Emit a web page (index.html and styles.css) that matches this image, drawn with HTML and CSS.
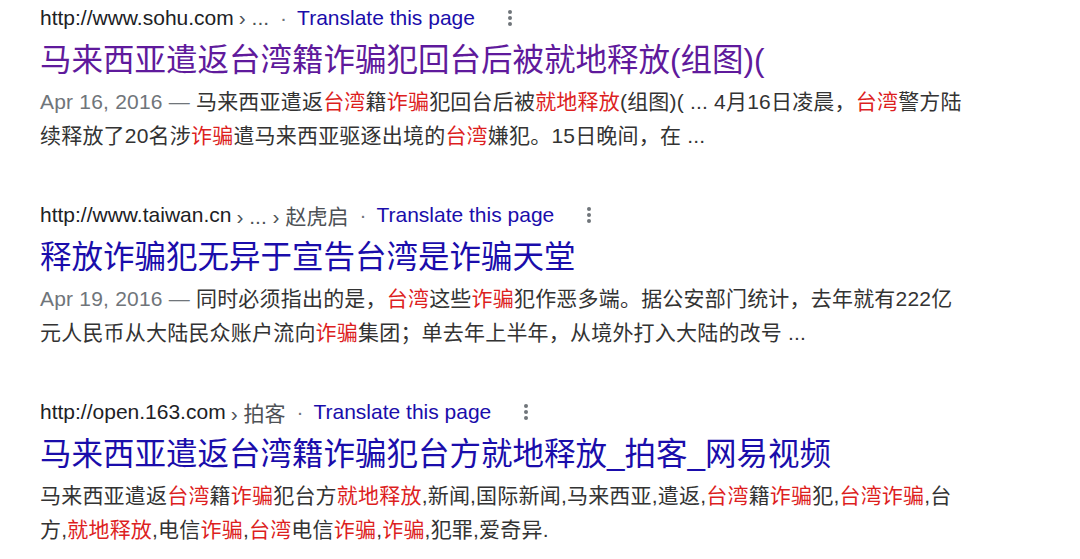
FILE: index.html
```html
<!DOCTYPE html>
<html>
<head>
  <meta charset="utf-8">
  <title>搜索结果</title>
  <link rel="stylesheet" href="styles.css">
</head>
<body>
  <div class="results">
    <div class="result">
      <div class="url-line">
        <span class="site">http://www.sohu.com</span>
        <span class="crumb">› ...</span>
        <span class="sep">·</span>
        <a class="translate" href="#">Translate this page</a>
        <span class="more"><i></i><i></i><i></i></span>
      </div>
      <a class="title visited" href="#">马来西亚遣返台湾籍诈骗犯回台后被就地释放(组图)(</a>
      <div class="snippet">
        <span class="date">Apr 16, 2016 — </span>马来西亚遣返<em>台湾</em>籍<em>诈骗</em>犯回台后被<em>就地释放</em>(组图)( ... 4月16日凌晨，<em>台湾</em>警方陆<br>续释放了20名涉<em>诈骗</em>遣马来西亚驱逐出境的<em>台湾</em>嫌犯。15日晚间，在 ...
      </div>
    </div>

    <div class="result">
      <div class="url-line">
        <span class="site">http://www.taiwan.cn</span>
        <span class="crumb">› ... › 赵虎启</span>
        <span class="sep">·</span>
        <a class="translate" href="#">Translate this page</a>
        <span class="more"><i></i><i></i><i></i></span>
      </div>
      <a class="title" href="#">释放诈骗犯无异于宣告台湾是诈骗天堂</a>
      <div class="snippet">
        <span class="date">Apr 19, 2016 — </span>同时必须指出的是，<em>台湾</em>这些<em>诈骗</em>犯作恶多端。据公安部门统计，去年就有222亿<br>元人民币从大陆民众账户流向<em>诈骗</em>集团；单去年上半年，从境外打入大陆的改号 ...
      </div>
    </div>

    <div class="result">
      <div class="url-line">
        <span class="site">http://open.163.com</span>
        <span class="crumb">› 拍客</span>
        <span class="sep">·</span>
        <a class="translate" href="#">Translate this page</a>
        <span class="more"><i></i><i></i><i></i></span>
      </div>
      <a class="title" href="#">马来西亚遣返台湾籍诈骗犯台方就地释放_拍客_网易视频</a>
      <div class="snippet">
        马来西亚遣返<em>台湾</em>籍<em>诈骗</em>犯台方<em>就地释放</em>,新闻,国际新闻,马来西亚,遣返,<em>台湾</em>籍<em>诈骗</em>犯,<em>台湾诈骗</em>,台<br>方,<em>就地释放</em>,电信<em>诈骗</em>,<em>台湾</em>电信<em>诈骗</em>,<em>诈骗</em>,犯罪,爱奇异.
      </div>
    </div>
  </div>
</body>
</html>
```

FILE: styles.css
```css
body {
  margin: 0;
  background-color: #fff;
  font-family: "Liberation Sans", Arial, "Noto Sans CJK SC", sans-serif;
  color: #202124;
}
.results {
  padding: 4px 0 0 40px;
  width: 1000px;
}
.result {
  margin-bottom: 48px;
}
.result:last-child {
  margin-bottom: 0;
}
.url-line {
  display: flex;
  align-items: center;
  height: 28px;
  font-size: 21px;
  white-space: nowrap;
}
.site {
  color: #202124;
}
.crumb {
  color: #4d5156;
  margin-left: 5px;
}
.sep {
  color: #70757a;
  margin: 0 10px 0 11px;
}
.translate {
  color: #1a0dab;
  text-decoration: none;
}
.more {
  display: flex;
  flex-direction: column;
  gap: 2px;
  margin-left: 33px;
}
.more i {
  display: block;
  width: 4px;
  height: 4px;
  border-radius: 50%;
  background-color: #70757a;
}
.title {
  display: block;
  margin-top: 8px;
  font-size: 31.5px;
  line-height: 40px;
  color: #1a0dab;
  text-decoration: none;
  white-space: nowrap;
}
.title.visited {
  color: #5f1a9c;
}
.snippet {
  margin-top: 5px;
  font-size: 21px;
  line-height: 34px;
  color: #333;
  white-space: nowrap;
  letter-spacing: 0.2px;
}
.snippet .date {
  color: #70757a;
}
.snippet em {
  font-style: normal;
  color: #dd1f1f;
}
```
